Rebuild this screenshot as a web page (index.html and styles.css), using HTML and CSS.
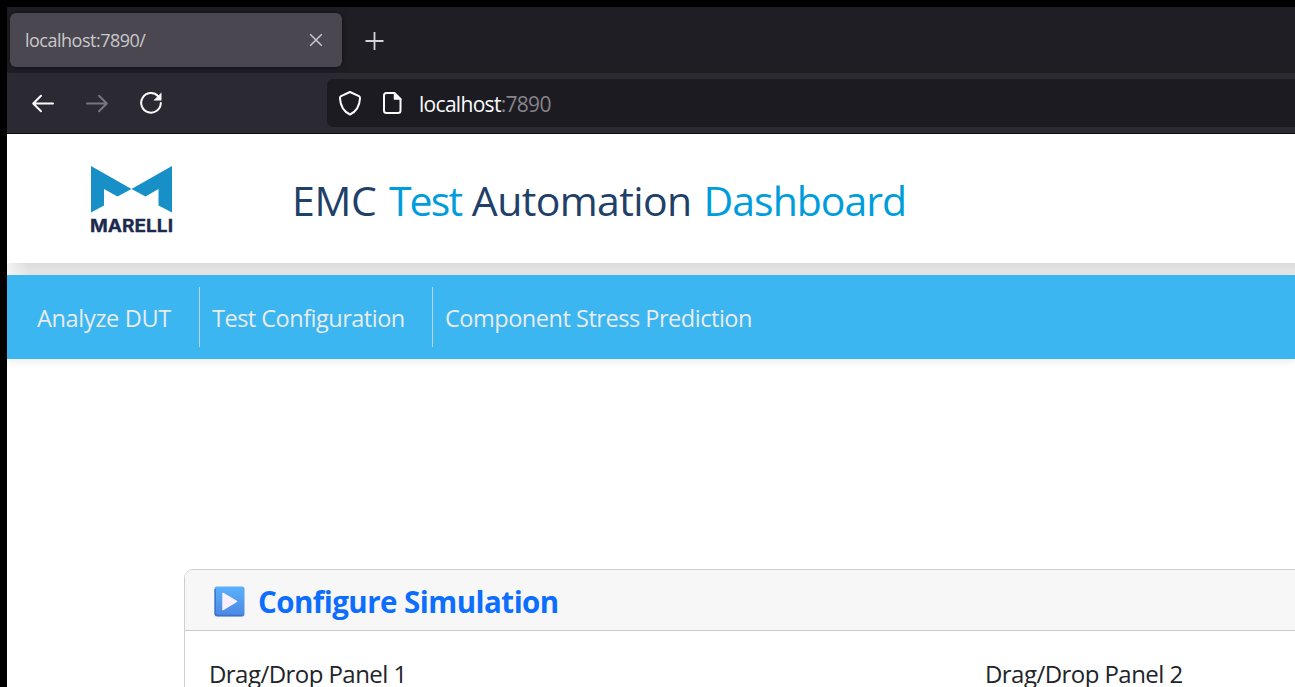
FILE: index.html
```html
<!DOCTYPE html>
<html lang="en">
<head>
<meta charset="utf-8">
<title>EMC Test Automation Dashboard</title>
<link rel="stylesheet" href="styles.css">
</head>
<body>
<div class="window">
  <div class="tabs">
    <div class="tab">
      <span class="tab-title">localhost:7890/</span>
      <svg class="close" width="14" height="14" viewBox="0 0 14 14"><path d="M1.2 1.2l11.6 11.6M12.8 1.2L1.2 12.8"/></svg>
    </div>
    <svg class="plus" width="20" height="20" viewBox="0 0 20 20"><path d="M10.500 1v18M1.500 10h18"/></svg>
  </div>
  <div class="toolbar">
    <svg class="tool back" width="24" height="24" viewBox="0 0 24 24"><path d="M22 12.500H3M10 4.700L2.200 12.500l7.800 7.800"/></svg>
    <svg class="tool forward" width="24" height="24" viewBox="0 0 24 24"><path d="M2 12.500h19M14 4.700l7.800 7.800-7.800 7.800"/></svg>
    <svg class="tool reload" width="24" height="24" viewBox="0 0 24 24"><path d="M19.2 5.2A9.8 9.8 0 1 0 21.8 12"/><path class="solid" d="M22.2 2.2v7h-7z"/></svg>
    <div class="address">
      <svg class="tool" width="24" height="26" viewBox="0 0 24 26"><path d="M12 2l9 4.200c1 .5 1.100 1 1 2.200C21.600 15.500 18.500 21.500 12 24.500 5.500 21.500 2.400 15.500 2 8.400 1.900 7.200 2 6.700 3 6.200z"/></svg>
      <svg class="tool page" width="20" height="24" viewBox="0 0 20 24"><path d="M4.500 2H12.500l6 6v11.500q0 2.500-2.500 2.500H4.500q-2.500 0-2.500-2.500V4.500Q2 2 4.500 2z"/><path class="solid" d="M12 1.500v7H19z"/></svg>
      <span class="url">localhost<span class="port">:7890</span></span>
    </div>
  </div>
  <header class="header">
    <svg class="logo" width="84" height="70" viewBox="0 0 84 70">
      <path d="M1 1l40.500 23L27.500 31.500 14 24v16.500L1 47.500zM82 1L41.500 24l14 7.500L68.500 24v16.500L82 47.500z"/>
      <text x="0" y="67" textLength="83" lengthAdjust="spacingAndGlyphs">MARELLI</text>
    </svg>
    <h1 class="title"><span class="emc">EMC </span><span class="accent test">Test </span><span class="automation">Automation </span><span class="accent dashboard">Dashboard</span></h1>
  </header>
  <div class="header-shadow"></div>
  <nav class="nav">
    <a class="link analyze">Analyze DUT</a>
    <a class="link config">Test Configuration</a>
    <a class="link stress">Component Stress Prediction</a>
  </nav>
  <main class="main">
    <section class="card">
      <div class="card-header">
        <svg class="play" width="31" height="31" viewBox="0 0 31 31">
          <defs><linearGradient id="g" x2="0" y2="1"><stop stop-color="#5ab1fb"/><stop offset="1" stop-color="#4b87e2"/></linearGradient></defs>
          <rect x="0.500" y="0.500" width="30" height="30" rx="2.500" fill="url(#g)"/>
          <path d="M1.200 3v24q0 2.500 2.500 2.500H28" fill="none" stroke="#3c72cd" stroke-width="1.400"/>
          <path d="M9 7.500l13.500 7.800L9 23.500z" fill="#fbf0ff" stroke="#fbf0ff" stroke-width="1.500" stroke-linejoin="round"/>
        </svg>
        <h2 class="card-title">Configure Simulation</h2>
      </div>
      <div class="panels">
        <div class="panel">Drag/Drop Panel 1</div>
        <div class="panel">Drag/Drop Panel 2</div>
      </div>
    </section>
  </main>
</div>
</body>
</html>
```
FILE: styles.css
```css
* { box-sizing: border-box; }
body {
  margin: 0;
  height: 687px;
  padding: 7px 0 0 7px;
  background: #000;
  overflow: hidden;
  font-family: "Open Sans", "Noto Sans", sans-serif;
  white-space: nowrap;
}
.window { height: 680px; background: #fff; overflow: hidden; }
svg { flex: none; display: block; }
.tabs {
  display: flex;
  height: 66px;
  padding: 6px 0 0 3px;
  background: #1f1e25;
}
.tab {
  display: flex;
  align-items: center;
  justify-content: space-between;
  width: 332px;
  height: 54px;
  padding: 0 19px 0 15px;
  border-radius: 6px;
  background: #4a4751;
  box-shadow: 0 0 5px rgba(0, 0, 0, .5);
}
.tab-title { font-size: 18px; letter-spacing: -.5px; color: #c9c8cb; }
.close { stroke: #c9c8cb; stroke-width: 1.500; fill: none; }
.plus { margin: 18px 0 0 22px; stroke: #d5d5d8; stroke-width: 1.800; fill: none; }
.toolbar {
  display: flex;
  align-items: center;
  height: 61px;
  padding-left: 24px;
  background: #2b2a33;
  border-bottom: 1px solid #0c0c0d;
}
.tool { fill: none; stroke: #fbfbfe; stroke-width: 2; stroke-linecap: round; stroke-linejoin: round; }
.solid { fill: #fbfbfe; stroke-width: .5; }
.forward { margin-left: 30px; stroke: #77767c; }
.reload { margin-left: 30px; }
.address {
  display: flex;
  flex: 1;
  align-items: center;
  height: 48px;
  margin-left: 164px;
  padding-left: 11px;
  border-radius: 6px 0 0 6px;
  background: #1c1b22;
}
.page { margin-left: 20px; }
.url { margin-left: 17px; padding-top: 2px; font-size: 21px; letter-spacing: -.7px; color: #fbfbfe; }
.port { color: #85848a; }
.header { display: flex; height: 129px; background: #fff; }
.logo { margin: 31px 0 0 83px; fill: #178fc7; }
.logo text { font: 700 17px "Inter", sans-serif; fill: #1b2a4e; stroke: #1b2a4e; stroke-width: .3; }
.title {
  margin: 38px 0 0 118px;
  font-size: 41px;
  font-weight: 400;
  line-height: 57px;
  word-spacing: 2px;
  color: #1f4068;
}
.accent { color: #009ddc; }
.emc { letter-spacing: -.3px; }
.test { letter-spacing: -1.9px; }
.automation { letter-spacing: -.62px; }
.dashboard { letter-spacing: -1px; }
.header-shadow {
  height: 12px;
  background: linear-gradient(90deg, rgba(255, 255, 255, .6), transparent 22px), linear-gradient(#dcdcdc, #e8e8e8);
}
.nav {
  display: flex;
  height: 84px;
  padding: 12px 0;
  background: #3bb6f0;
  box-shadow: 0 3px 8px rgba(0, 0, 0, .08);
}
.link { padding-left: 12px; font-size: 23.5px; line-height: 62px; color: #e9ebee; }
.analyze { width: 193px; padding-left: 30px; border-right: 1px solid #b9d2df; letter-spacing: -.33px; }
.config { width: 233px; border-right: 1px solid #b9d2df; letter-spacing: -.5px; }
.stress { letter-spacing: -.47px; }
.main { padding: 210px 0 0 177px; }
.card {
  width: 1600px;
  height: 300px;
  border: 1px solid #cfcfcf;
  border-radius: 9px;
  overflow: hidden;
}
.card-header {
  display: flex;
  align-items: center;
  height: 61px;
  padding: 3px 0 0 29px;
  background: #f7f7f7;
  border-bottom: 1px solid #cbcbcb;
}
.card-title {
  margin: 0 0 0 13px;
  font-size: 29.5px;
  font-weight: 700;
  line-height: 40px;
  letter-spacing: -.53px;
  color: #0d6efd;
}
.panels { display: grid; grid-template-columns: 776px 1fr; padding: 25px 0 0 24px; }
.panel { font-size: 24px; line-height: 36px; letter-spacing: -.55px; color: #212529; }
```
